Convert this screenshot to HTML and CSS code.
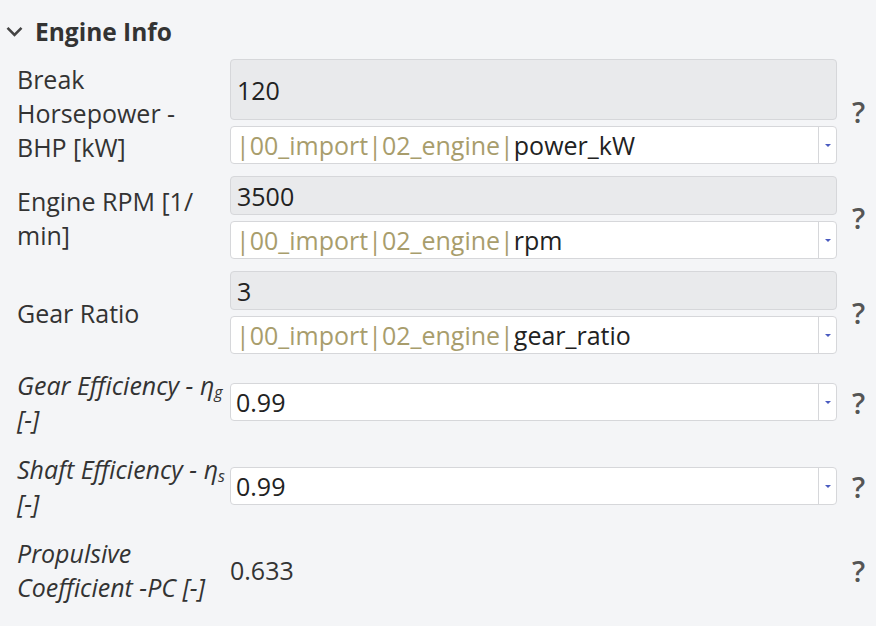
FILE: index.html
```html
<!DOCTYPE html>
<html>
<head>
<meta charset="utf-8">
<link rel="stylesheet" href="styles.css">
</head>
<body>
<div class="panel">
  <div class="header">
    <svg class="chev" width="17" height="11" viewBox="0 0 17 11"><path d="M1.5 1.8 L8.5 8.8 L15.5 1.8" fill="none" stroke="#444" stroke-width="2.6"/></svg>
    <span class="title">Engine Info</span>
  </div>
  <div class="rows">
    <div class="row r1">
      <div class="label">Break Horsepower - BHP [kW]</div>
      <div class="inputs">
        <div class="ro grow">120</div>
        <div class="sel"><div class="val"><span class="path">|00_import|02_engine|</span>power_kW</div><div class="arrow"><span class="tri"></span></div></div>
      </div>
      <div class="help">?</div>
    </div>
    <div class="row">
      <div class="label">Engine RPM [1/ min]</div>
      <div class="inputs">
        <div class="ro">3500</div>
        <div class="sel"><div class="val"><span class="path">|00_import|02_engine|</span>rpm</div><div class="arrow"><span class="tri"></span></div></div>
      </div>
      <div class="help">?</div>
    </div>
    <div class="row">
      <div class="label">Gear Ratio</div>
      <div class="inputs">
        <div class="ro">3</div>
        <div class="sel"><div class="val"><span class="path">|00_import|02_engine|</span>gear_ratio</div><div class="arrow"><span class="tri"></span></div></div>
      </div>
      <div class="help">?</div>
    </div>
    <div class="row it">
      <div class="label italic">Gear Efficiency - η<sub>g</sub> [-]</div>
      <div class="inputs">
        <div class="sel"><div class="val">0.99</div><div class="arrow"><span class="tri"></span></div></div>
      </div>
      <div class="help">?</div>
    </div>
    <div class="row it">
      <div class="label italic">Shaft Efficiency - η<sub>s</sub> [-]</div>
      <div class="inputs">
        <div class="sel"><div class="val">0.99</div><div class="arrow"><span class="tri"></span></div></div>
      </div>
      <div class="help">?</div>
    </div>
    <div class="row it">
      <div class="label italic">Propulsive Coefficient -PC [-]</div>
      <div class="inputs">
        <div class="plain">0.633</div>
      </div>
      <div class="help">?</div>
    </div>
  </div>
</div>
</body>
</html>
```
FILE: styles.css
```css
html, body {
  margin: 0;
  padding: 0;
  background: #f4f5f7;
}
body {
  font-family: "Open Sans", "Liberation Sans", sans-serif;
  color: #333;
  width: 876px;
  height: 626px;
  overflow: hidden;
}
.panel {
  padding-top: 14px;
}
.header {
  display: flex;
  align-items: center;
  height: 34px;
  padding-left: 6px;
}
.chev {
  margin-right: 12px;
  margin-top: 1px;
}
.title {
  font-size: 24.5px;
  font-weight: 700;
  color: #333;
}
.rows {
  display: flex;
  flex-direction: column;
  gap: 12px;
  margin-top: 11px;
}
.row {
  display: flex;
  align-items: center;
}
.r1 {
  align-items: stretch;
}
.label {
  width: 212px;
  flex-shrink: 0;
  padding: 2px 0 2px 17px;
  margin-right: 1px;
  font-size: 25px;
  line-height: 34px;
}
.r1 .label {
  padding-top: 3px;
  padding-bottom: 0;
}
.italic {
  font-style: italic;
}
.italic sub {
  font-size: 16px;
  line-height: 0;
  vertical-align: baseline;
  position: relative;
  top: 3px;
}
.inputs {
  width: 607px;
  flex-shrink: 0;
  display: flex;
  flex-direction: column;
  gap: 6px;
}
.ro {
  background: #e9eaec;
  border: 1px solid #d6d7da;
  border-radius: 4px;
  box-sizing: border-box;
  height: 39px;
  display: flex;
  align-items: center;
  padding-left: 6px;
  font-size: 25px;
  color: #222;
}
.ro.grow {
  flex: 1;
}
.sel {
  background: #fff;
  border: 1px solid #d6d7da;
  border-radius: 4px;
  height: 38px;
  box-sizing: border-box;
  display: flex;
  font-size: 25px;
}
.val {
  flex: 1;
  display: flex;
  align-items: center;
  padding-left: 5px;
  white-space: nowrap;
  color: #222;
}
.path {
  color: #a89d6c;
}
.arrow {
  width: 17px;
  border-left: 1px solid #d6d7da;
  display: flex;
  align-items: center;
  justify-content: center;
}
.tri {
  width: 0;
  height: 0;
  border-left: 3px solid transparent;
  border-right: 3px solid transparent;
  border-top: 3px solid #4a5bc0;
}
.plain {
  font-size: 25px;
  padding-left: 0;
}
.help {
  width: 39px;
  flex-shrink: 0;
  display: flex;
  align-items: center;
  justify-content: center;
  font-size: 29px;
  font-weight: 600;
  color: #555;
  padding-left: 4px;
  box-sizing: border-box;
}
```
